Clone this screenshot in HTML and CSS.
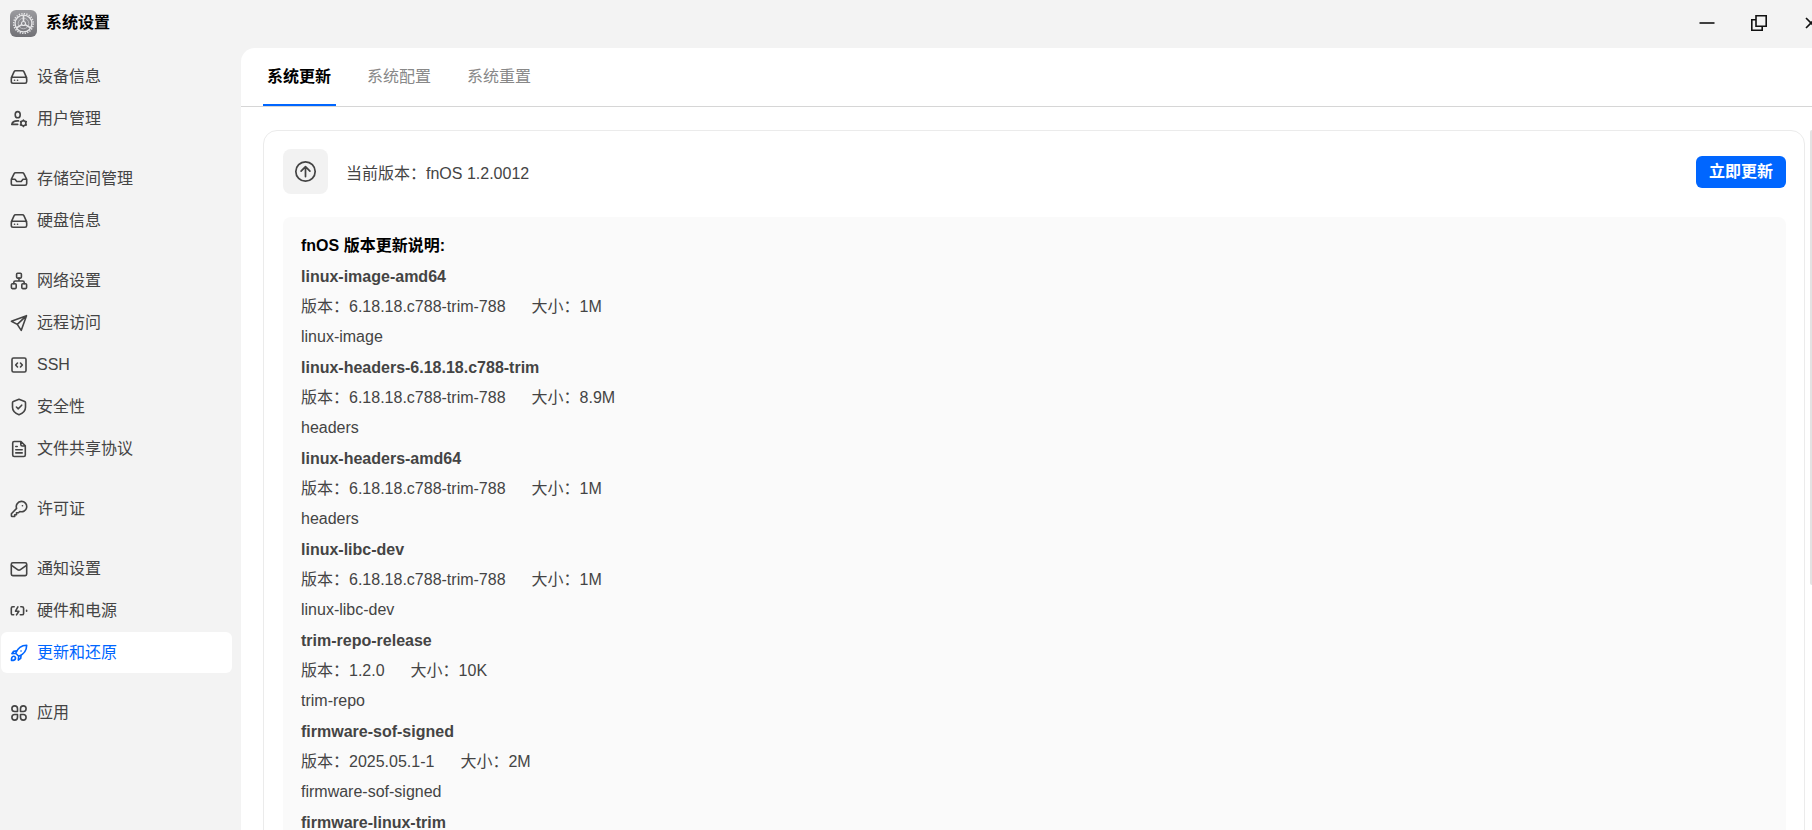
FILE: index.html
```html
<!DOCTYPE html>
<html lang="zh-CN">
<head>
  <meta charset="UTF-8">
  <meta name="viewport" content="width=device-width, initial-scale=1.0">
  <title>系统设置</title>
  <link rel="stylesheet" href="styles.css">
</head>
<body>
  <header class="titlebar">
    <svg class="app-icon" viewBox="0 0 27 27">
      <defs>
        <linearGradient id="app-bg" x1="0" y1="0" x2="0" y2="1">
          <stop offset="0" stop-color="#9b9b9f"/>
          <stop offset="1" stop-color="#717176"/>
        </linearGradient>
      </defs>
      <rect width="27" height="27" rx="6" fill="url(#app-bg)"/>
      <g fill="none" stroke="#e6e6e8">
        <circle cx="13.5" cy="13.5" r="9.8" stroke-width="1.6" stroke-dasharray="1.3 1.265"/>
        <circle cx="13.5" cy="13.5" r="8.4" stroke-width="1.3"/>
        <circle cx="13.5" cy="13.5" r="5.3" stroke-width="0.8" stroke="#c6c6ca"/>
        <circle cx="13.5" cy="13.5" r="2" stroke-width="1.1"/>
        <path d="M13.5 11.5V5.3M11.8 14.6l-5.2 3.2M15.2 14.6l5.2 3.2" stroke-width="1.6"/>
      </g>
    </svg>
    <h1>系统设置</h1>
    <div class="window-controls">
      <button type="button" aria-label="最小化">
        <svg viewBox="0 0 16 16"><path d="M0.5 8h15"/></svg>
      </button>
      <button type="button" aria-label="还原">
        <svg viewBox="0 0 16 16"><path d="M5 .8h10.2v10.4H5zM5 4.8H.8v10.400h10.400v-4"/></svg>
      </button>
      <button type="button" aria-label="关闭">
        <svg viewBox="0 0 16 16"><path d="M3 3l10 10M13 3L3 13"/></svg>
      </button>
    </div>
  </header>

  <div class="layout">
    <nav class="sidebar">
      <div class="nav-group">
        <a class="nav-item" href="#">
          <svg viewBox="0 0 20 20"><path d="M2.300 10.800L5 4.800Q5.500 3.800 6.600 3.800H13.400Q14.500 3.800 15 4.800L17.700 10.800M4 10.300h12a1.700 1.700 0 0 1 1.700 1.700v2.500a1.700 1.700 0 0 1-1.700 1.700H4a1.700 1.700 0 0 1-1.700-1.700v-2.500A1.700 1.700 0 0 1 4 10.300zM5.500 13.300h.1M8.500 13.300h.1"/></svg>
          <span>设备信息</span>
        </a>
        <a class="nav-item" href="#">
          <svg viewBox="0 0 20 20"><ellipse cx="8.700" cy="5.700" rx="2.500" ry="3.100"/><path d="M9.500 11.900C6.500 11.700 3.300 12.800 2.800 15.400H8.700"/><circle cx="14.400" cy="14.300" r="2.500"/><path d="M14.400 11v.5M14.400 17.100v.5M11.500 12.600l.6.400M16.700 15.600l.6.400M11.500 16l.6-.4M16.700 13l.6-.4"/></svg>
          <span>用户管理</span>
        </a>
      </div>
      <div class="nav-group">
        <a class="nav-item" href="#">
          <svg viewBox="0 0 20 20"><path d="M2.300 10.300L5 4.800Q5.500 3.800 6.600 3.800H13.400Q14.500 3.800 15 4.800L17.700 10.300V14.500a1.700 1.700 0 0 1-1.700 1.700H4a1.700 1.700 0 0 1-1.700-1.700V10.300H6L7.800 12.500H12.200L14 10.300H17.700"/></svg>
          <span>存储空间管理</span>
        </a>
        <a class="nav-item" href="#">
          <svg viewBox="0 0 20 20"><path d="M2.300 10.800L5 4.800Q5.500 3.800 6.600 3.800H13.400Q14.500 3.800 15 4.800L17.700 10.800M4 10.300h12a1.700 1.700 0 0 1 1.700 1.700v2.500a1.700 1.700 0 0 1-1.700 1.700H4a1.700 1.700 0 0 1-1.700-1.700v-2.500A1.700 1.700 0 0 1 4 10.300zM5.500 13.300h.1M8.500 13.300h.1"/></svg>
          <span>硬盘信息</span>
        </a>
      </div>
      <div class="nav-group">
        <a class="nav-item" href="#">
          <svg viewBox="0 0 20 20"><rect x="7.600" y="2.300" width="4.800" height="4.800" rx="1"/><rect x="2.400" y="12.800" width="4.800" height="4.800" rx="1"/><rect x="12.800" y="12.800" width="4.800" height="4.800" rx="1"/><path d="M10 7.100V10M4.800 12.800V11.500Q4.800 10 6.300 10H13.700Q15.200 10 15.200 11.500V12.800"/></svg>
          <span>网络设置</span>
        </a>
        <a class="nav-item" href="#">
          <svg viewBox="0 0 20 20"><path d="M17.500 2.700L2.400 8.300L8.300 11.400L12.200 17.400zM17.500 2.700L8.300 11.400"/></svg>
          <span>远程访问</span>
        </a>
        <a class="nav-item" href="#">
          <svg viewBox="0 0 20 20"><rect x="3" y="3" width="14" height="14" rx="1.500"/><path d="M8.500 8L6.700 10L8.500 12M11.500 8L13.300 10L11.500 12"/></svg>
          <span>SSH</span>
        </a>
        <a class="nav-item" href="#">
          <svg viewBox="0 0 20 20"><path d="M10 2.300L15.700 4.500Q16.500 4.800 16.500 5.700V10.200C16.500 14 14 16.200 10 17.700C6 16.200 3.500 14 3.500 10.200V5.700Q3.500 4.800 4.300 4.500zM7.400 10L9.300 11.800L12.700 8.200"/></svg>
          <span>安全性</span>
        </a>
        <a class="nav-item" href="#">
          <svg viewBox="0 0 20 20"><path d="M12 2.500H5.200A1.500 1.500 0 0 0 3.700 4V16a1.500 1.500 0 0 0 1.500 1.500H14.800a1.500 1.500 0 0 0 1.500-1.500V6.800zM11.800 2.500V5.500Q11.800 7 13.300 7H16.300M6.800 7.500H8.200M6.800 10.700H13.200M6.800 13.900H13.200"/></svg>
          <span>文件共享协议</span>
        </a>
      </div>
      <div class="nav-group">
        <a class="nav-item" href="#">
          <svg viewBox="0 0 20 20"><path d="M12.300 2.400a5.200 5.200 0 1 1-1.500 10.100L9.500 13.800H7.500V15.800H5.700V17.500H3.200Q2.400 17.500 2.400 16.700V14.800L7.600 9.400A5.200 5.200 0 0 1 12.300 2.400zM13.400 6.700h.1"/></svg>
          <span>许可证</span>
        </a>
      </div>
      <div class="nav-group">
        <a class="nav-item" href="#">
          <svg viewBox="0 0 20 20"><rect x="2.300" y="3.800" width="15.400" height="12.800" rx="1.500"/><path d="M2.600 6.300L8.900 10.800Q10 11.500 11.100 10.800L17.400 6.300"/></svg>
          <span>通知设置</span>
        </a>
        <a class="nav-item" href="#">
          <svg viewBox="0 0 20 20"><path d="M5.200 5.800H3.700Q2.300 5.800 2.300 7.200V12.400Q2.300 13.800 3.700 13.800H4.700M11.800 5.800H12.900Q14.600 5.800 14.600 7.200V12.400Q14.600 13.800 12.900 13.800H11.300M8.900 5.900L6.500 10.200H9.900L7.500 13.900M17.600 9.300V10.300"/></svg>
          <span>硬件和电源</span>
        </a>
        <a class="nav-item active" href="#">
          <svg viewBox="0 0 20 20"><path d="M6.700 10.300C8.500 5.500 12 2.400 17.700 2.300C17.600 8 14.500 11.500 9.700 13.300zM7.700 7.900L4.600 8.300L2.900 10.700L6.700 10.300M12.100 12.300L11.700 15.400L9.300 17.100L9.700 13.300M2.500 17.500C2.300 15 3.100 13.300 4.600 13.300C6 13.300 6.700 14.400 6.500 15.500C6.200 17 4.500 17.500 2.500 17.500zM12 8h.1"/></svg>
          <span>更新和还原</span>
        </a>
      </div>
      <div class="nav-group">
        <a class="nav-item" href="#">
          <svg viewBox="0 0 20 20"><path d="M8.500 8.500H5.700A2.800 2.800 0 1 1 8.500 5.700zM11.500 8.500V5.700A2.800 2.800 0 1 1 14.300 8.500zM8.500 11.500V14.300A2.800 2.800 0 1 1 5.700 11.500zM11.500 11.500H14.300A2.800 2.800 0 1 1 11.500 14.300z"/></svg>
          <span>应用</span>
        </a>
      </div>
    </nav>

    <main class="panel">
      <div class="tabs" role="tablist">
        <button class="tab active" type="button" role="tab" aria-selected="true">系统更新</button>
        <button class="tab" type="button" role="tab" aria-selected="false">系统配置</button>
        <button class="tab" type="button" role="tab" aria-selected="false">系统重置</button>
      </div>

      <div class="content">
        <section class="card">
          <div class="version-row">
            <div class="version-icon">
              <svg viewBox="0 0 24 24"><circle cx="12" cy="12" r="10.100"/><path d="M12 17.300V7M7.400 11.600L12 7L16.600 11.600"/></svg>
            </div>
            <p class="version-text">当前版本：fnOS 1.2.0012</p>
            <button class="update-btn" type="button">立即更新</button>
          </div>

          <div class="notes">
            <h2>fnOS 版本更新说明:</h2>

            <h3>linux-image-amd64</h3>
            <p><span>版本：6.18.18.c788-trim-788</span><span>大小：1M</span></p>
            <p>linux-image</p>

            <h3>linux-headers-6.18.18.c788-trim</h3>
            <p><span>版本：6.18.18.c788-trim-788</span><span>大小：8.9M</span></p>
            <p>headers</p>

            <h3>linux-headers-amd64</h3>
            <p><span>版本：6.18.18.c788-trim-788</span><span>大小：1M</span></p>
            <p>headers</p>

            <h3>linux-libc-dev</h3>
            <p><span>版本：6.18.18.c788-trim-788</span><span>大小：1M</span></p>
            <p>linux-libc-dev</p>

            <h3>trim-repo-release</h3>
            <p><span>版本：1.2.0</span><span>大小：10K</span></p>
            <p>trim-repo</p>

            <h3>firmware-sof-signed</h3>
            <p><span>版本：2025.05.1-1</span><span>大小：2M</span></p>
            <p>firmware-sof-signed</p>

            <h3>firmware-linux-trim</h3>
          </div>
        </section>
        <div class="scroll-thumb"></div>
      </div>
    </main>
  </div>
</body>
</html>
```
FILE: styles.css
```css
* {
  box-sizing: border-box;
  margin: 0;
  padding: 0;
}

body {
  display: flex;
  flex-direction: column;
  height: 100vh;
  overflow: hidden;
  background: #f3f3f3;
  color: #444;
  font-family: "Liberation Sans", "Noto Sans CJK SC", sans-serif;
  font-size: 16px;
  line-height: 24px;
}

button {
  border: none;
  background: none;
  font: inherit;
  cursor: pointer;
}

svg {
  flex: none;
  fill: none;
  stroke: currentColor;
  stroke-linecap: round;
  stroke-linejoin: round;
}

/* title bar */
.titlebar {
  display: flex;
  align-items: center;
  flex: none;
  height: 48px;
  padding: 0 0 2px 10px;
  overflow: hidden;
}

.app-icon {
  width: 27px;
  height: 27px;
  stroke: none;
  stroke-linecap: butt;
}

.titlebar h1 {
  margin-left: 9px;
  color: #000;
  font-size: 16px;
}

/* the close button runs past the window edge */
.window-controls {
  display: flex;
  margin-left: auto;
  margin-right: -25px;
}

.window-controls button {
  display: flex;
  align-items: center;
  justify-content: center;
  width: 52px;
  height: 46px;
  color: #111;
}

.window-controls svg {
  width: 16px;
  height: 16px;
  stroke-width: 1.6;
  stroke-linecap: butt;
  stroke-linejoin: miter;
}

.layout {
  display: flex;
  flex: 1;
  min-height: 0;
}

/* sidebar */
.sidebar {
  display: flex;
  flex-direction: column;
  gap: 19px;
  flex: none;
  width: 241px;
  padding: 8px 9px 0 1px;
}

.nav-group {
  display: flex;
  flex-direction: column;
  gap: 1px;
}

.nav-item {
  display: flex;
  align-items: center;
  gap: 8px;
  height: 41px;
  padding-left: 8px;
  border-radius: 6px;
  color: #444;
  text-decoration: none;
}

.nav-item svg {
  width: 20px;
  height: 20px;
  stroke-width: 1.6;
}

.nav-item.active {
  background: #fff;
  color: #0066ff;
}

/* main panel */
.panel {
  display: flex;
  flex-direction: column;
  flex: 1;
  min-width: 0;
  background: #fff;
  border-top-left-radius: 14px;
}

.tabs {
  display: flex;
  gap: 27px;
  flex: none;
  height: 59px;
  padding-left: 22px;
  border-bottom: 1px solid #d6d6d6;
}

.tab {
  padding: 0 5px 0 4px;
  border-top: 2px solid transparent;
  border-bottom: 2px solid transparent;
  color: #888;
}

.tab.active {
  border-bottom-color: #0066ff;
  color: #000;
  font-weight: bold;
}

.content {
  display: flex;
  flex: 1;
  gap: 5px;
  min-height: 0;
  padding: 23px 0 0 22px;
  overflow: hidden;
}

.card {
  flex: 1;
  height: max-content;
  padding: 18px 18px 20px 19px;
  border: 1px solid #ebebeb;
  border-radius: 14px;
}

.scroll-thumb {
  width: 2px;
  height: 65%;
  border-radius: 2px 0 0 2px;
  background: #e2e2e2;
}

.version-row {
  display: flex;
  align-items: center;
  margin-bottom: 23px;
}

.version-icon {
  display: flex;
  align-items: center;
  justify-content: center;
  width: 45px;
  height: 45px;
  border-radius: 8px;
  background: #f2f2f2;
}

.version-icon svg {
  width: 23px;
  height: 23px;
  stroke-width: 1.8;
}

.version-text {
  flex: 1;
  padding: 4px 0 0 18px;
}

.update-btn {
  height: 32px;
  padding: 0 13px;
  border-radius: 6px;
  background: #0066ff;
  color: #fff;
  font-weight: bold;
}

.notes {
  padding: 14px 18px;
  border-radius: 8px;
  background: #fafafa;
  line-height: 30px;
}

.notes h2 {
  color: #000;
  font-size: 16px;
}

.notes h3 {
  font-size: 16px;
  line-height: 31px;
}

.notes p {
  display: flex;
  gap: 26px;
}
```
